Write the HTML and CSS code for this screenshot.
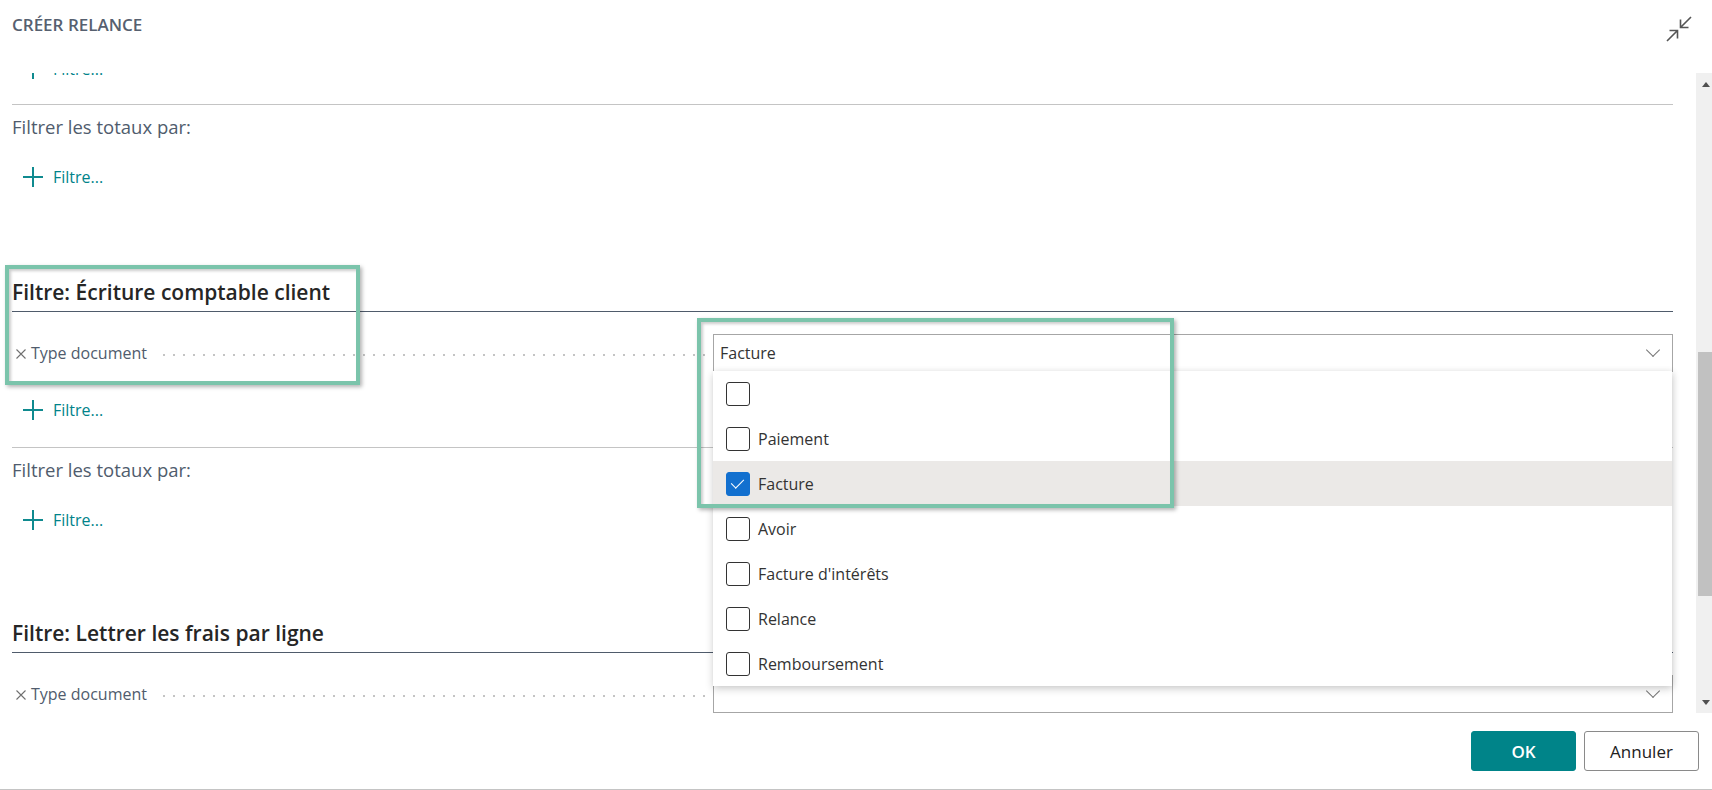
FILE: index.html
```html
<!DOCTYPE html>
<html lang="fr">
  <head>
    <meta charset="UTF-8" />
    <meta name="viewport" content="width=device-width, initial-scale=1.0" />
    <title>Créer relance</title>
    <link rel="stylesheet" href="styles.css">
  </head>
  <body>
    <div class="dialog">
      <header class="dialog-header">
        <h1 class="dialog-title">CRÉER RELANCE</h1>
        <button class="collapse-btn" title="Réduire">
          <svg width="26" height="26" viewBox="0 0 26 26" fill="none" stroke="#555" stroke-width="1.6">
            <path d="M25 1 L14.5 11.5 M14.5 3.5 V11.5 H22.5" />
            <path d="M1 25 L11.5 14.5 M3.5 14.5 H11.5 V22.5" />
          </svg>
        </button>
      </header>

      <div class="dialog-body">
        <div class="scroll-area">
          <div class="scroll-content">

            <!-- Client (scrolled past) -->
            <section class="filter-section first">
              <div class="add-filter"><span class="plus"></span>Filtre...</div>
              <div class="totals">
                <div class="totals-label">Filtrer les totaux par:</div>
                <div class="add-filter"><span class="plus"></span>Filtre...</div>
              </div>
            </section>

            <!-- Écriture comptable client -->
            <section class="filter-section">
              <h2 class="section-head">Filtre: Écriture comptable client</h2>
              <div class="field-row">
                <div class="field-label">
                  <svg class="remove" width="10" height="10" viewBox="0 0 10 10" stroke="#6f6f6f" stroke-width="1.1"><path d="M0.5 0.5 L9.5 9.5 M9.5 0.5 L0.5 9.5" /></svg>
                  Type document<span class="leader"></span>
                </div>
                <div class="select-wrap">
                  <div class="select"><span>Facture</span><span class="chevron"></span></div>
                  <ul class="dropdown">
                    <li class="option"><span class="check"></span></li>
                    <li class="option"><span class="check"></span>Paiement</li>
                    <li class="option selected"><span class="check on"></span>Facture</li>
                    <li class="option"><span class="check"></span>Avoir</li>
                    <li class="option"><span class="check"></span>Facture d'intérêts</li>
                    <li class="option"><span class="check"></span>Relance</li>
                    <li class="option"><span class="check"></span>Remboursement</li>
                  </ul>
                  <div class="mark mark-options"></div>
                </div>
              </div>
              <div class="add-filter"><span class="plus"></span>Filtre...</div>
              <div class="totals">
                <div class="totals-label">Filtrer les totaux par:</div>
                <div class="add-filter"><span class="plus"></span>Filtre...</div>
              </div>
              <div class="mark mark-field"></div>
            </section>

            <!-- Lettrer les frais par ligne -->
            <section class="filter-section">
              <h2 class="section-head">Filtre: Lettrer les frais par ligne</h2>
              <div class="field-row">
                <div class="field-label">
                  <svg class="remove" width="10" height="10" viewBox="0 0 10 10" stroke="#6f6f6f" stroke-width="1.1"><path d="M0.5 0.5 L9.5 9.5 M9.5 0.5 L0.5 9.5" /></svg>
                  Type document<span class="leader"></span>
                </div>
                <div class="select-wrap"><div class="select"><span></span><span class="chevron"></span></div></div>
              </div>
            </section>

          </div>
        </div>
        <div class="scrollbar">
          <div class="sb-arrow up"></div>
          <div class="sb-track"><div class="sb-thumb"></div></div>
          <div class="sb-arrow down"></div>
        </div>
      </div>

      <footer class="dialog-footer">
        <button class="btn primary">OK</button>
        <button class="btn">Annuler</button>
      </footer>
    </div>
  </body>
</html>
```

FILE: styles.css
```css
* {
  box-sizing: border-box;
}

body {
  margin: 0;
  font-family: "Open Sans", "Noto Sans", sans-serif;
  color: #212121;
  background: #fff;
}

.dialog {
  height: 790px;
  display: flex;
  flex-direction: column;
  border-bottom: 1px solid #c4c4c4;
}

/* header */
.dialog-header {
  height: 73px;
  flex: none;
  display: flex;
  align-items: flex-start;
  justify-content: space-between;
  padding: 0 20px 0 12px;
}

.dialog-title {
  margin: 13px 0 0;
  font-size: 17px;
  line-height: 24px;
  font-weight: 600;
  color: #56606f;
}

.collapse-btn {
  margin-top: 16px;
  padding: 0;
  border: none;
  background: none;
  width: 26px;
  height: 26px;
  cursor: pointer;
}

/* body + scroll */
.dialog-body {
  height: 640px;
  flex: none;
  display: flex;
}

.scroll-area {
  flex: 1;
  overflow: hidden;
}

.scroll-content {
  margin-top: -42px;
  padding: 0 23px 0 12px;
}

.filter-section {
  position: relative;
  margin-bottom: 83px;
}

.filter-section.first {
  margin-bottom: 85px;
}

.filter-section.first .totals {
  margin-top: 19px;
}

.section-head {
  margin: 0;
  padding-bottom: 5px;
  font-size: 21px;
  line-height: 28px;
  font-weight: 600;
  color: #262626;
  border-bottom: 1px solid #4f5b6b;
}

.field-row {
  margin-top: 22px;
  height: 38px;
  display: grid;
  grid-template-columns: 701px 1fr;
}

.field-label {
  display: flex;
  align-items: center;
  font-size: 16px;
  color: #505c6d;
}

.remove {
  flex: none;
  margin: 1px 5px 0 4px;
}

.leader {
  flex: 1;
  height: 4px;
  margin: 3px 8px 0 12px;
  background: radial-gradient(circle, #c4c4c4 0.9px, transparent 1.2px) 0 50% / 10px 4px repeat-x;
}

.select-wrap {
  position: relative;
}

.select {
  height: 38px;
  border: 1px solid #a6a6a6;
  display: flex;
  align-items: center;
  justify-content: space-between;
  padding: 0 14px 0 6px;
  font-size: 16px;
  color: #333;
}

.chevron {
  width: 10px;
  height: 10px;
  margin-top: -6px;
  border-right: 1px solid #777;
  border-bottom: 1px solid #777;
  transform: rotate(45deg);
}

/* dropdown list */
.dropdown {
  position: absolute;
  top: 37px;
  left: 0;
  right: 1px;
  margin: 0;
  padding: 0;
  list-style: none;
  background: #fff;
  box-shadow: 0 3px 8px rgba(0, 0, 0, 0.18), 2px 0 6px rgba(0, 0, 0, 0.06);
  z-index: 2;
}

.option {
  height: 45px;
  display: flex;
  align-items: center;
  padding-left: 13px;
  font-size: 16px;
  color: #333;
}

.option.selected {
  background: #ebe9e7;
}

.check {
  width: 24px;
  height: 24px;
  margin-right: 8px;
  border: 1px solid #333;
  border-radius: 3px;
  background: #fff;
  position: relative;
}

.check.on {
  background: #1270cf;
  border-color: #1270cf;
}

.check.on::after {
  content: "";
  position: absolute;
  left: 7px;
  top: 3px;
  width: 6px;
  height: 11px;
  border-right: 1.5px solid #fff;
  border-bottom: 1.5px solid #fff;
  transform: rotate(45deg);
}

/* add filter links */
.add-filter {
  margin-top: 22px;
  height: 32px;
  display: flex;
  align-items: center;
  padding-left: 11px;
  font-size: 16px;
  color: #00838a;
}

.plus {
  position: relative;
  width: 20px;
  height: 20px;
  margin-right: 10px;
}

.plus::before,
.plus::after {
  content: "";
  position: absolute;
  background: #0f8a8f;
}

.plus::before {
  left: 0;
  top: 9px;
  width: 20px;
  height: 1.6px;
}

.plus::after {
  left: 9.2px;
  top: 0;
  width: 1.6px;
  height: 20px;
}

.totals {
  margin-top: 21px;
  border-top: 1px solid #c4c4c4;
  padding-top: 10px;
}

.totals-label {
  font-size: 18.5px;
  line-height: 24px;
  color: #505c6d;
}

/* highlight frames */
.mark {
  position: absolute;
  border: 4px solid #7bc4ab;
  box-shadow: 2px 2px 4px rgba(0, 0, 0, 0.3), inset 2px 2px 3px rgba(0, 0, 0, 0.2);
  pointer-events: none;
  z-index: 3;
}

.mark-field {
  left: -7px;
  top: -13px;
  width: 355px;
  height: 120px;
}

.mark-options {
  left: -16px;
  top: -16px;
  width: 477px;
  height: 190px;
}

/* scrollbar */
.scrollbar {
  width: 16px;
  flex: none;
  background: #f0f0f0;
  display: flex;
  flex-direction: column;
}

.sb-arrow {
  height: 22px;
  flex: none;
  display: flex;
  align-items: center;
  justify-content: center;
  padding-left: 3px;
}

.sb-arrow::before {
  content: "";
  border-left: 4.5px solid transparent;
  border-right: 4.5px solid transparent;
}

.sb-arrow.up::before {
  border-bottom: 5px solid #505050;
}

.sb-arrow.down::before {
  border-top: 5px solid #505050;
}

.sb-track {
  flex: 1;
  padding-left: 2px;
}

.sb-thumb {
  margin-top: 257px;
  height: 244px;
  background: #c1c1c1;
}

/* footer */
.dialog-footer {
  flex: 1;
  display: flex;
  justify-content: flex-end;
  align-items: flex-start;
  gap: 8px;
  padding: 18px 13px 0 0;
}

.btn {
  height: 40px;
  min-width: 115px;
  border: 1px solid #8a8a8a;
  border-radius: 3px;
  background: #fff;
  font-family: inherit;
  font-size: 17px;
  color: #212121;
  cursor: pointer;
}

.btn.primary {
  min-width: 105px;
  border-color: #008489;
  background: #008489;
  color: #fff;
  font-weight: 600;
}
```
